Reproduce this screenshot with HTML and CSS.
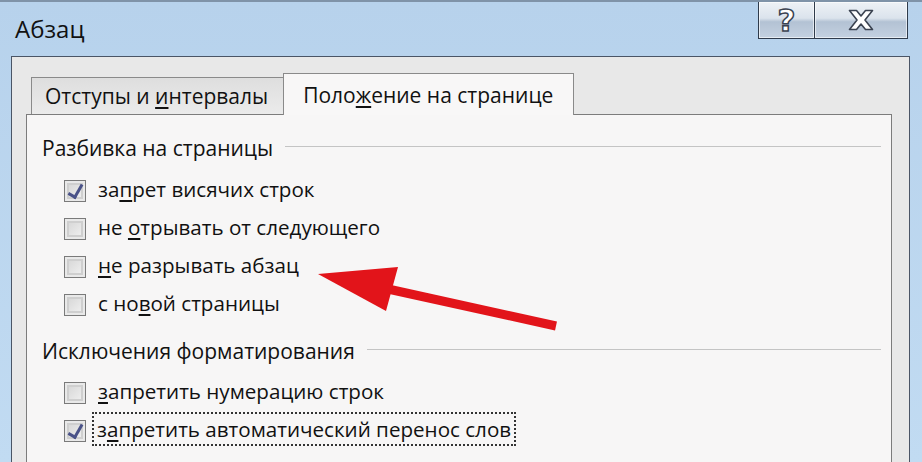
FILE: index.html
```html
<!DOCTYPE html>
<html lang="ru">
<head>
<meta charset="utf-8">
<title>Абзац</title>
<link rel="stylesheet" href="styles.css">
</head>
<body>
<div class="window">
  <div class="titlebar">
    <div class="title">Абзац</div>
    <div class="buttons">
      <div class="tbtn help"><span class="qmark">?</span></div>
      <div class="tbtn close">
        <svg width="26" height="22" viewBox="0 0 26 22"><path d="M1.5 1.5 H8.5 L13 7 L17.5 1.5 H24.5 L17 11 L24.5 20.5 H17.5 L13 15 L8.5 20.5 H1.5 L9 11 Z" fill="#ffffff" stroke="#3a4250" stroke-width="1.6" stroke-linejoin="round"/></svg>
      </div>
    </div>
  </div>
  <div class="client">
    <div class="tabs">
      <div class="tab">Отступы и <u>и</u>нтервалы</div>
      <div class="tab active">Поло<u>ж</u>ение на странице</div>
    </div>
    <div class="panel">
      <div class="group">Разбивка на страницы</div>
      <div class="row"><span class="cb checked"></span><span class="label">за<u>п</u>рет висячих строк</span></div>
      <div class="row"><span class="cb"></span><span class="label">не <u>о</u>трывать от следующего</span></div>
      <div class="row"><span class="cb"></span><span class="label"><u>н</u>е разрывать абзац</span></div>
      <div class="row"><span class="cb"></span><span class="label">с но<u>в</u>ой страницы</span></div>
      <div class="group second">Исключения форматирования</div>
      <div class="row"><span class="cb"></span><span class="label"><u>з</u>апретить нумерацию строк</span></div>
      <div class="row"><span class="cb checked"></span><span class="label focus">з<u>а</u>претить автоматический перенос слов</span></div>
    </div>
  </div>
</div>
<svg class="arrow" width="922" height="462" viewBox="0 0 922 462">
  <line x1="388" y1="289" x2="556" y2="326" stroke="#e2141a" stroke-width="9"/>
  <polygon points="318,274 398,267 386,311" fill="#e2141a"/>
</svg>
</body>
</html>
```
FILE: styles.css
```css
html, body {
  margin: 0;
  padding: 0;
  width: 922px;
  height: 462px;
  overflow: hidden;
  background: #bcd6ee;
  font-family: "Open Sans", "Noto Sans", sans-serif;
  color: #111;
}
.window {
  width: 922px;
  height: 462px;
  background: linear-gradient(#b7d2ec, #c1dbf2);
  border-top: 2px solid #7f93a8;
  box-sizing: border-box;
  display: flex;
  flex-direction: column;
}
.titlebar {
  height: 54px;
  display: flex;
  justify-content: space-between;
  align-items: flex-start;
  flex-shrink: 0;
}
.title {
  font-size: 24px;
  padding: 10px 0 0 15px;
  color: #111;
}
.buttons {
  display: flex;
  margin-right: 14px;
}
.tbtn {
  height: 36px;
  border: 1px solid #2f3b4b;
  border-top: none;
  box-shadow: inset 0 0 0 1px rgba(255,255,255,0.6);
  background: linear-gradient(#eef2f6 0%, #dbe3ec 45%, #b3c2d4 55%, #c4d1e0 100%);
  display: flex;
  align-items: center;
  justify-content: center;
  box-sizing: content-box;
}
.help { width: 55px; }
.close { width: 92px; border-left: none; }
.qmark {
  font-family: "DejaVu Sans", sans-serif;
  font-weight: bold;
  font-size: 31px;
  color: #fff;
  -webkit-text-stroke: 1.5px #3a4250;
  line-height: 1;
  margin-top: 1px;
}
.client {
  margin-left: 11px;
  width: 899px;
  flex: 1;
  background: #e8e8e8;
  border: 1px solid #4a5566;
  border-bottom: none;
  box-sizing: border-box;
  padding: 16px 17px 0 14px;
  display: flex;
  flex-direction: column;
}
.tabs {
  display: flex;
  align-items: flex-end;
  padding-left: 5px;
  height: 41px;
  position: relative;
  z-index: 1;
}
.tab {
  font-size: 21px;
  height: 37px;
  box-sizing: border-box;
  padding: 4px 15px 0 13px;
  border: 1px solid #8a8a8a;
  border-bottom: none;
  border-right: none;
  background: linear-gradient(#dedede, #ebebeb);
  white-space: nowrap;
  line-height: 28px;
}
.tab.active {
  height: 42px;
  margin-bottom: -1px;
  padding: 7px 20px 0 19px;
  border-right: 1px solid #8a8a8a;
  background: #f8f7f7;
}
.panel {
  flex: 1;
  background: #f7f6f6;
  border: 1px solid #7c7c7c;
  border-bottom: none;
  padding: 20px 10px 0 15px;
  display: flex;
  flex-direction: column;
}
.group {
  font-size: 21px;
  line-height: 26px;
  display: flex;
  white-space: nowrap;
  margin-bottom: 11px;
}
.group::after {
  content: "";
  flex: 1;
  height: 1px;
  background: #c4c4c4;
  margin: 11px 0 0 12px;
  align-self: flex-start;
}
.group.second {
  margin-top: 14px;
  margin-bottom: 10px;
}
.row {
  height: 38px;
  display: flex;
  align-items: center;
  padding-left: 22px;
  font-size: 20.6px;
}
.label {
  margin-left: 8px;
  white-space: nowrap;
  line-height: 28px;
  margin-top: -4px;
  padding: 0 3px;
  border: 1px dotted transparent;
}
.label.focus {
  border: 2px dotted #333;
  margin-left: 6px;
  line-height: 30px;
}
.cb {
  width: 22px;
  height: 22px;
  box-sizing: border-box;
  border: 1px solid #7a7a7a;
  background: linear-gradient(135deg, #d2d2d2, #f4f4f4);
  box-shadow: inset 0 0 0 2px #e9e9e9, inset 0 0 0 4px #cfcfcf;
  position: relative;
  flex-shrink: 0;
}
.cb.checked::after {
  content: "";
  position: absolute;
  left: 6px;
  top: 1px;
  width: 6px;
  height: 13px;
  border-right: 3px solid #4a5288;
  border-bottom: 3px solid #4a5288;
  transform: rotate(30deg);
}
u {
  text-decoration-thickness: 2px;
  text-underline-offset: 3px;
}
.arrow {
  position: absolute;
  left: 0;
  top: 0;
  pointer-events: none;
}
```
